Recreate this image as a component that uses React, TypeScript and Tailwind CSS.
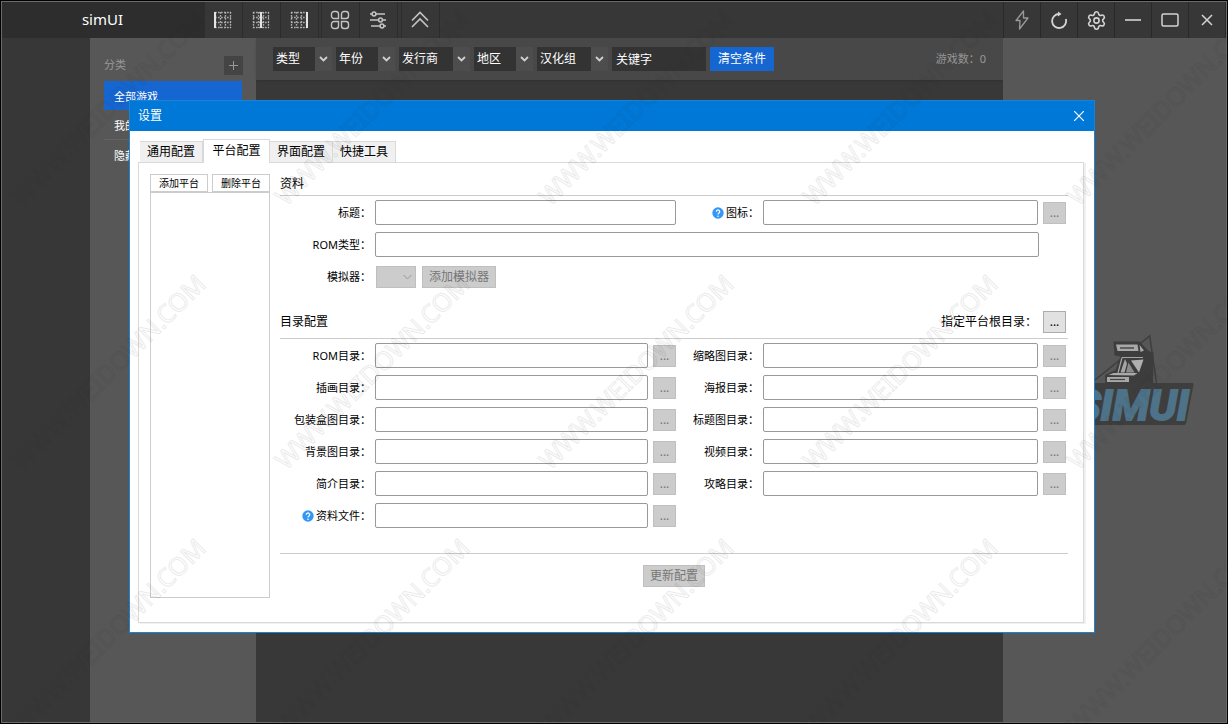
import type { ReactNode } from "react";
import { Settings } from "lucide-react";

const FILTERS = [
  { label: "类型", width: "w-[42px]" },
  { label: "年份", width: "w-[42px]" },
  { label: "发行商", width: "w-[54px]" },
  { label: "地区", width: "w-[42px]" },
  { label: "汉化组", width: "w-[54px]" },
];

const TABS = ["通用配置", "平台配置", "界面配置", "快捷工具"];

const DIRECTORIES: [string, string | null][] = [
  ["ROM目录", "缩略图目录"],
  ["插画目录", "海报目录"],
  ["包装盒图目录", "标题图目录"],
  ["背景图目录", "视频目录"],
  ["简介目录", "攻略目录"],
  ["资料文件", null],
];

function ToolButton({ label, children }: { label: string; children: ReactNode }) {
  return (
    <button
      aria-label={label}
      className="flex h-9 w-[38px] items-center justify-center border-r border-[#2c2c2c] pr-[2px] text-[#c4c4c4] hover:bg-[#444]"
    >
      {children}
    </button>
  );
}

function WindowButton({ label, children }: { label: string; children: ReactNode }) {
  return (
    <button
      aria-label={label}
      className="flex h-9 w-[37px] items-center justify-center border-l border-[#292929] text-[#d4d4d4] hover:bg-[#444]"
    >
      {children}
    </button>
  );
}

function ColumnsIcon({ solid }: { solid: number }) {
  return (
    <svg width="18" height="18" viewBox="0 0 18 18" fill="none" stroke="currentColor">
      {[1.5, 6.5, 11.5, 16.5].map((y) => (
        <path key={y} d={`M1 ${y}H17`} strokeWidth="1.400" strokeDasharray="1.700 1.300" opacity="0.8" />
      ))}
      {[1.5, 6.5, 11.5, 16.5].map((x) => (
        <path key={x} d={`M${x} 1V17`} strokeWidth="1.400" strokeDasharray="1.700 1.300" opacity="0.8" />
      ))}
      <path d={`M${solid} 1V17`} strokeWidth="2" stroke="#e4e4e4" />
    </svg>
  );
}

function Toolbar() {
  return (
    <header className="flex h-9 shrink-0 bg-[#373737]">
      <h1 className="flex w-[203px] items-center justify-center bg-[#2d2d2d] pr-[2px] pb-px text-[15px] text-white">simUI</h1>
      <div className="flex">
        <ToolButton label="左栏"><ColumnsIcon solid={1} /></ToolButton>
        <ToolButton label="中栏"><ColumnsIcon solid={9} /></ToolButton>
        <ToolButton label="右栏"><ColumnsIcon solid={17} /></ToolButton>
      </div>
      <div className="ml-[2px] flex border-l border-[#2c2c2c]">
        <ToolButton label="网格">
          <svg width="20" height="20" viewBox="0 0 20 20" fill="none" stroke="currentColor" strokeWidth="1.4">
            <path d="M4 1.5h2a2.500 2.500 0 0 1 2.500 2.500v4.500h-4.500a2.500 2.500 0 0 1-2.500-2.500v-2a2.500 2.500 0 0 1 2.500-2.500z" />
            <path d="M14 1.500h2a2.500 2.500 0 0 1 2.500 2.500v2a2.500 2.500 0 0 1-2.500 2.500h-4.500v-4.500a2.500 2.500 0 0 1 2.500-2.500z" />
            <path d="M4 11.500h4.500v4.500a2.500 2.500 0 0 1-2.500 2.500h-2a2.500 2.500 0 0 1-2.500-2.500v-2a2.500 2.500 0 0 1 2.500-2.500z" />
            <path d="M11.500 11.500h4.500a2.500 2.500 0 0 1 2.500 2.500v2a2.500 2.500 0 0 1-2.500 2.500h-2a2.500 2.500 0 0 1-2.500-2.500z" />
          </svg>
        </ToolButton>
        <ToolButton label="筛选">
          <svg width="18" height="18" viewBox="0 0 18 18" fill="none" stroke="currentColor" strokeWidth="1.5">
            <path d="M1 3h2M7 3h9M1 9h8.500M13.500 9h3.500M2 15h9M15 15h2" />
            <circle cx="5" cy="3" r="1.900" />
            <circle cx="11.500" cy="9" r="1.900" />
            <circle cx="13" cy="15" r="1.900" />
          </svg>
        </ToolButton>
      </div>
      <div className="ml-[3px] flex border-l border-[#2c2c2c]">
        <ToolButton label="收起">
          <svg width="18" height="18" viewBox="0 0 18 18" fill="none" stroke="currentColor" strokeWidth="1.600">
            <path d="M1 9.500l8-8 8 8M1 16l8-8 8 8" />
          </svg>
        </ToolButton>
      </div>
      <div className="ml-auto flex border-r border-[#292929]">
        <WindowButton label="加速">
          <svg width="14" height="20" viewBox="0 0 14 20" fill="none" stroke="#999" strokeWidth="1.300" strokeLinejoin="round">
            <path d="M8.500 1L1 10.500h4L4.500 19 13 8H8.500z" />
          </svg>
        </WindowButton>
        <WindowButton label="刷新">
          <svg width="18" height="18" viewBox="0 0 18 18" fill="none" stroke="currentColor" strokeWidth="1.800">
            <path d="M15.800 8A7 7 0 1 1 9.500 3" />
            <path d="M8 0.500l3.500 2.500L8 5.500z" fill="currentColor" stroke="none" />
          </svg>
        </WindowButton>
        <WindowButton label="设置"><Settings size={21} strokeWidth={1.8} /></WindowButton>
        <WindowButton label="最小化">
          <svg width="18" height="18" viewBox="0 0 18 18" stroke="currentColor" strokeWidth="1.600"><path d="M1 9h16" /></svg>
        </WindowButton>
        <WindowButton label="最大化">
          <svg width="18" height="18" viewBox="0 0 18 18" fill="none" stroke="currentColor" strokeWidth="1.500">
            <rect x="1" y="3" width="16" height="12" rx="1.500" />
          </svg>
        </WindowButton>
        <WindowButton label="关闭">
          <svg width="12" height="12" viewBox="0 0 12 12" stroke="currentColor" strokeWidth="1.500"><path d="M1 1l10 10M11 1L1 11" /></svg>
        </WindowButton>
      </div>
    </header>
  );
}

function Sidebar() {
  return (
    <nav className="w-[166px] shrink-0 bg-[#575757] pt-[17px] pr-[14px] pl-[14px] text-[11px] text-white">
      <div className="mb-[6px] flex h-5 items-center justify-between text-[#999]">
        <h2>分类</h2>
        <button aria-label="添加分类" className="-mr-px flex size-[19px] items-center justify-center bg-[#444] hover:bg-[#4a4a4a]">
          <svg width="9" height="9" viewBox="0 0 9 9" stroke="currentColor"><path d="M4.500 0v9M0 4.500h9" /></svg>
        </button>
      </div>
      <ul>
        <li><a href="#all" className="flex h-[29px] items-center bg-[#1566d0] px-[10px] pt-[3px]">全部游戏</a></li>
        <li><a href="#mine" className="flex h-[30px] items-center border-b border-[#636363] px-[10px] pt-[3px]">我的喜爱</a></li>
        <li><a href="#hidden" className="flex h-[30px] items-center px-[10px] pt-[3px]">隐藏游戏</a></li>
      </ul>
    </nav>
  );
}

function FilterBar() {
  return (
    <div className="flex h-[42px] items-center gap-1 bg-[#484848] pr-[17px] pl-[17px] text-[12px] text-white shadow-sm">
      {FILTERS.map(({ label, width }) => (
        <label key={label} className="flex h-6 items-center bg-[#4d4d4d]">
          <select aria-label={label} className={`h-6 appearance-none bg-[#333] pl-[3px] outline-none ${width}`}>
            <option>{label}</option>
          </select>
          <svg className="pointer-events-none w-[17px]" height="6" viewBox="0 0 17 6" fill="none" stroke="#d0d0d0" strokeWidth="1.800">
            <path d="M5 1l3.500 3.500L12 1" />
          </svg>
        </label>
      ))}
      <input aria-label="关键字" placeholder="关键字" className="h-6 w-[94px] bg-[#333] px-1 outline-none placeholder:text-white" />
      <button className="h-6 w-16 bg-[#1566d0] hover:bg-[#2474dd]">清空条件</button>
      <p className="ml-auto text-[11px] text-[#999]">游戏数：0</p>
    </div>
  );
}

function ArcadeLogo() {
  return (
    <svg width="126" height="96" viewBox="1072 332 126 96" role="img" aria-label="SIMUI">
      <path d="M1090 384L1149.700 336 1157 386" fill="none" stroke="#3e3e3e" strokeWidth="1.500" />
      <path d="M1113.500 341.500h26l9 9.500 5 1.500-.5 32h-47.500l-.5-9.500 10.500-5 5-13.500-6-1z" fill="#3d3d3d" />
      <path d="M1116 344.500h21.500l1 6.500h-21z" fill="#a8a8a8" />
      <path d="M1120 348h14" stroke="#484848" strokeWidth="1.500" />
      <path d="M1139.500 345l4.500 5.500-3.500 1.500z" fill="#aaa" />
      <path d="M1122 357.500l-4 15.500" stroke="#a5a5a5" strokeWidth="1.200" />
      <path d="M1125 359l-4.500 13.500h4l2.500-9z" fill="#a5a5a5" />
      <path d="M1128.500 362.500l-2.500 10h8.500z" fill="#8c8c8c" />
      <path d="M1122 357.500h21" stroke="#a5a5a5" strokeWidth="1" />
      <path d="M1143.500 359.500l-12.500 1 8 12z" fill="#b0b0b0" />
      <path d="M1108.500 375l5-2h24l-3.500 2.500z" fill="#aaa" />
      <path d="M1107 377h22v5h-22z" fill="#a8a8a8" />
      <path d="M1110 379.500h15" stroke="#444" strokeWidth="1.200" />
      <path d="M1082 383h110.500q1.500 0 1 2l-7.500 38.500q-.5 1.500-2 1.500h-109z" fill="#3e3e3e" />
      <text
        x="1189"
        y="420"
        textAnchor="end"
        fill="#4e7288"
        stroke="#4e7288"
        strokeWidth="2"
        fontFamily="Roboto, 'Liberation Sans', sans-serif"
        fontWeight="700"
        fontStyle="italic"
        fontSize="43"
      >
        SIMUI
      </text>
    </svg>
  );
}

function HelpIcon() {
  return (
    <svg width="12" height="12" viewBox="0 0 12 12" className="mr-[2px] mb-[2px]" aria-hidden="true">
      <circle cx="6" cy="6" r="5.700" fill="#3397f7" />
      <path d="M4.300 4.700a1.700 1.700 0 1 1 2.600 1.400c-.7.400-.9.600-.9 1.300" fill="none" stroke="#fff" strokeWidth="1.200" />
      <circle cx="6" cy="9.200" r=".800" fill="#fff" />
    </svg>
  );
}

function BrowseButton({ label, enabled = false }: { label: string; enabled?: boolean }) {
  return (
    <button
      aria-label={label}
      disabled={!enabled}
      className="flex h-[22px] w-[23px] shrink-0 items-center justify-center border border-[#adadad] bg-[#e1e1e1] text-[12px] text-black disabled:border-[#bfbfbf] disabled:bg-[#ccc] disabled:text-[#777]"
    >
      ...
    </button>
  );
}

type FieldProps = { id: string; label: string; right?: boolean; help?: boolean; browse?: boolean };

function Field({ id, label, right = false, help = false, browse = true }: FieldProps) {
  return (
    <div className="flex items-center">
      <label htmlFor={id} className={`flex shrink-0 items-center justify-end pt-[2px] pr-1 ${right ? "w-[87px]" : "w-[95px]"}`}>
        {help && <HelpIcon />}
        {label}：
      </label>
      <input id={id} className="h-[25px] min-w-0 flex-1 rounded-[2px] border border-[#999] bg-white px-1 outline-none focus:border-[#0078d7]" />
      {browse && <div className="ml-[5px] flex pt-px"><BrowseButton label={`选择${label}`} /></div>}
    </div>
  );
}

function PlatformForm() {
  return (
    <form className="flex min-w-0 flex-1 flex-col text-[11px]">
      <h3 className="flex h-[22px] items-center border-b border-[#ccc] pb-px text-[12px]">资料</h3>
      <div className="mt-1 grid gap-[7px] pr-[2px]">
        <div className="grid grid-cols-[396fr_390fr]">
          <Field id="title" label="标题" browse={false} />
          <Field id="icon" label="图标" right help />
        </div>
        <div className="pr-[27px]">
          <Field id="romtype" label="ROM类型" browse={false} />
        </div>
        <div className="flex h-[25px] items-center">
          <label htmlFor="emulator" className="flex w-[95px] justify-end pt-[2px] pr-1">模拟器：</label>
          <div className="ml-px grid items-center">
            <select id="emulator" disabled className="col-start-1 row-start-1 h-[22px] w-10 appearance-none border border-[#bfbfbf] bg-[#ccc]" />
            <svg className="pointer-events-none col-start-1 row-start-1 mr-1 justify-self-end" width="9" height="6" viewBox="0 0 9 6" fill="none" stroke="#999">
              <path d="M.5 1l4 4 4-4" />
            </svg>
          </div>
          <button disabled className="ml-[6px] h-[22px] w-[74px] border border-[#bfbfbf] bg-[#ccc] text-[12px] leading-5 text-[#777]">添加模拟器</button>
        </div>
      </div>
      <div className="mt-[22px] flex h-7 items-start justify-between border-b border-[#ccc] pr-[2px] text-[12px]">
        <h3 className="leading-[22px]">目录配置</h3>
        <div className="flex items-center">
          <span className="mr-[6px]">指定平台根目录：</span>
          <BrowseButton label="指定平台根目录" enabled />
        </div>
      </div>
      <div className="mt-1 grid gap-[7px] pr-[2px]">
        {DIRECTORIES.map(([left, right], row) => (
          <div key={left} className="grid grid-cols-[396fr_390fr]">
            <Field id={`left-${row}`} label={left} help={right === null} />
            {right && <Field id={`right-${row}`} label={right} right />}
          </div>
        ))}
      </div>
      <div className="mt-[25px] flex justify-center border-t border-[#ccc] pt-[11px]">
        <button disabled className="h-[22px] w-[62px] border border-[#bfbfbf] bg-[#ccc] text-[12px] leading-5 text-[#777]">更新配置</button>
      </div>
    </form>
  );
}

function SettingsDialog() {
  return (
    <section role="dialog" aria-label="设置" className="w-full max-w-[966px] border border-[#1883d7] bg-white text-black">
      <div className="flex h-[30px] items-center justify-between bg-[#0078d7] pr-[10px] pl-2 text-[12px] text-white">
        <h2>设置</h2>
        <button aria-label="关闭设置">
          <svg width="10" height="10" viewBox="0 0 10 10" stroke="currentColor" strokeWidth="1.200"><path d="M0 0l10 10M10 0L0 10" /></svg>
        </button>
      </div>
      <div className="px-2 pt-[7px] pb-[9px]">
        <div role="tablist" className="flex h-6 items-end pl-[2px] text-[12px]">
          {TABS.map((tab) => (
            <button
              key={tab}
              role="tab"
              aria-selected={tab === "平台配置"}
              className="flex h-[21px] w-[63px] items-center justify-center border border-b-0 border-l-0 border-[#d9d9d9] bg-[#f0f0f0] aria-selected:relative aria-selected:-mb-px aria-selected:h-6 aria-selected:w-[67px] aria-selected:border-l aria-selected:bg-white aria-selected:pb-px"
            >
              {tab}
            </button>
          ))}
        </div>
        <div className="mr-[2px] flex border border-[#d9d9d9] pt-[11px] pr-[15px] pb-6 pl-[11px] shadow-[2px_1px_0_#f0f0f0]">
          <div className="mr-[10px] flex w-[120px] shrink-0 flex-col">
            <div className="flex gap-1 text-[10px]">
              <button className="h-[18px] w-[58px] border border-[#ccc] bg-white leading-4">添加平台</button>
              <button className="h-[18px] w-[58px] border border-[#ccc] bg-white leading-4">删除平台</button>
            </div>
            <ul aria-label="平台列表" className="h-[406px] border border-[#ccc]" />
          </div>
          <PlatformForm />
        </div>
      </div>
    </section>
  );
}

function Watermark() {
  return (
    <div aria-hidden="true" className="pointer-events-none absolute inset-0 overflow-hidden">
      <div className="-mt-6 -ml-6 grid auto-rows-[264px] grid-cols-[repeat(5,264px)]">
        {Array.from({ length: 15 }, (_, i) => (
          <div key={i} className="flex items-center justify-center">
            <span className="-rotate-45 text-[25px] whitespace-nowrap text-transparent opacity-[0.09] [-webkit-text-stroke:1px_#2a2a2a]">
              WWW.WEIDOWN.COM
            </span>
          </div>
        ))}
      </div>
    </div>
  );
}

export default function App() {
  return (
    <div className="relative min-h-screen overflow-hidden bg-black p-px font-['Noto_Sans','Noto_Sans_CJK_SC',sans-serif]">
      <div className="flex min-h-[calc(100vh-2px)] flex-col border border-[#6b6b6b]">
        <Toolbar />
        <div className="flex flex-1">
          <div className="w-[88px] shrink-0 bg-[#373737]" />
          <Sidebar />
          <main className="min-w-0 flex-1 bg-[#383838]"><FilterBar /></main>
          <aside className="w-[223px] shrink-0 bg-[#575757] pt-[294px] pl-[69px]"><ArcadeLogo /></aside>
        </div>
      </div>
      <div className="absolute inset-0 flex items-start justify-center pt-[100px] pr-1">
        <SettingsDialog />
      </div>
      <Watermark />
    </div>
  );
}
